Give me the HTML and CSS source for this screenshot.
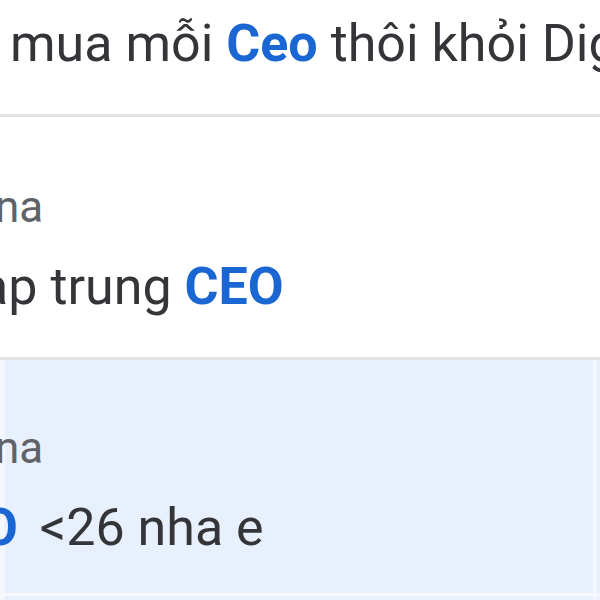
FILE: index.html
```html
<!DOCTYPE html>
<html lang="vi">
<head>
<meta charset="utf-8">
<title>Tìm kiếm</title>
<link rel="stylesheet" href="styles.css">
</head>
<body>
<div class="list">
  <div class="row row-first">
    <p class="msg"><span class="cut cut-msg1">mua mỗi <b class="hl">Ceo</b> thôi khỏi Digital</span></p>
  </div>
  <div class="row row-second">
    <p class="name"><span class="cut cut-name">na</span></p>
    <p class="msg"><span class="cut cut-msg2">ap trung <b class="hl">CEO</b></span></p>
  </div>
  <div class="row row-active">
    <p class="name"><span class="cut cut-name">na</span></p>
    <p class="msg"><span class="cut cut-msg3"><b class="hl hl-tail">O</b> &lt;26 nha e</span></p>
  </div>
  <div class="row row-active row-next"></div>
</div>
</body>
</html>
```

FILE: styles.css
```css
html, body {
  margin: 0;
  padding: 0;
  background: #ffffff;
}
body {
  width: 600px;
  height: 600px;
  overflow: hidden;
  font-family: Roboto, "Noto Sans", "Liberation Sans", sans-serif;
  color: #333538;
}
.list {
  display: flex;
  flex-direction: column;
}
.row {
  height: 236px;
  flex: none;
  box-sizing: border-box;
  border-top: 3px solid #e3e3e3;
  padding-top: 62px;
  display: flex;
  flex-direction: column;
  gap: 24px;
  overflow: hidden;
  white-space: nowrap;
}
.row-first {
  height: 114px;
  border-top: none;
  padding-top: 14px;
}
.row-second {
  height: 243px;
  padding-top: 64px;
}
.row-active {
  background: linear-gradient(to right, #f4f7fd 0 5px, #e8f0fe 5px 593px, #f4f7fd 593px 597px, #e8f0fe 597px);
}
.row-next {
  border-top: 3px solid #f7f9fe;
}
.name {
  margin: 0;
  font-size: 44px;
  line-height: 52px;
  color: #5f6368;
}
.msg {
  margin: 0;
  font-size: 52px;
  line-height: 60px;
  color: #333538;
}
.hl {
  color: #1a66d2;
  font-weight: 700;
}
.hl-tail {
  margin-right: 9px;
}
.cut {
  display: inline-block;
}
.cut-msg1 { margin-left: 10px; }
.cut-name { margin-left: -5px; }
.cut-msg2 { margin-left: -20px; }
.cut-msg3 { margin-left: -18px; }
```
